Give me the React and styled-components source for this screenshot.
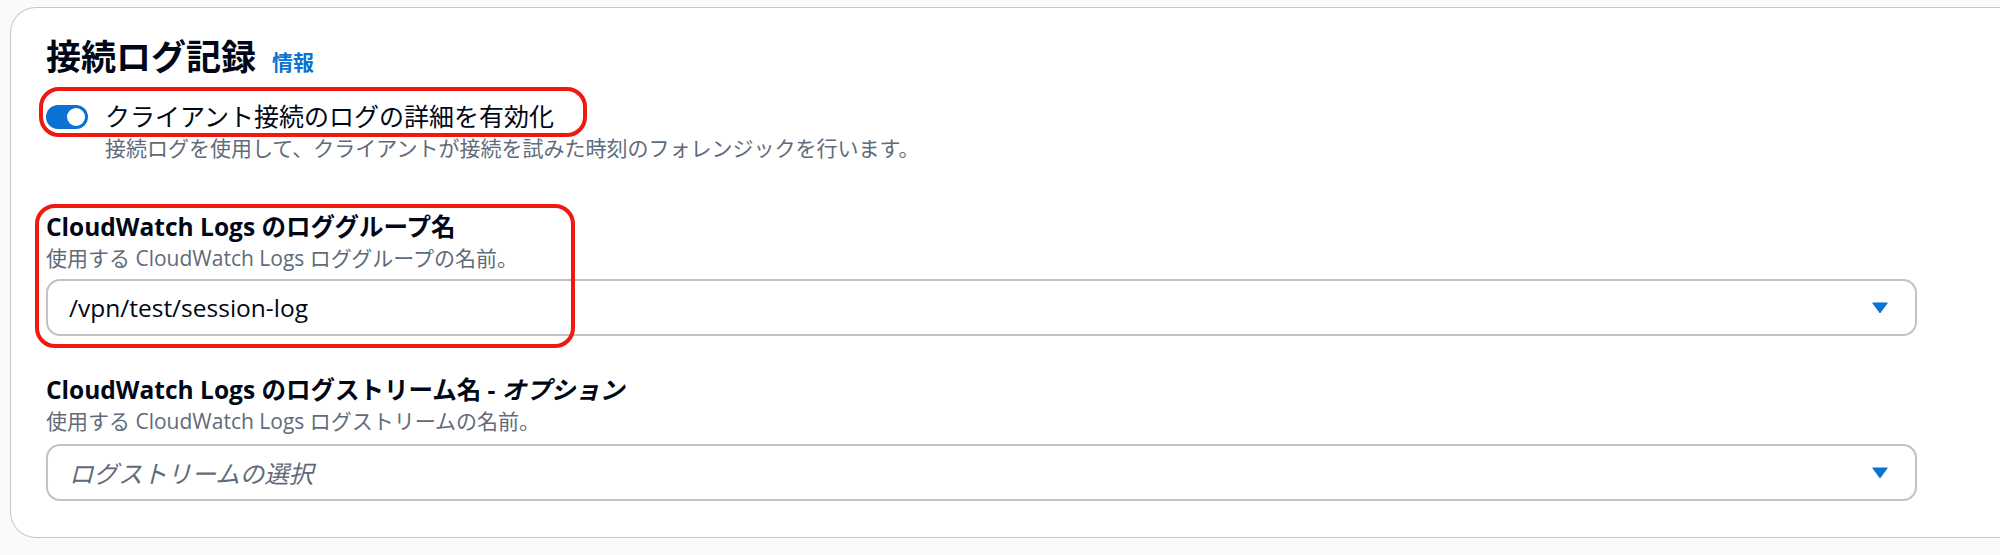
import React from 'react'
import styled, { createGlobalStyle } from 'styled-components'

const GlobalStyle = createGlobalStyle`
  html, body {
    margin: 0;
    padding: 0;
    background: #fafafa;
    font-family: "Open Sans", "Noto Sans CJK JP", sans-serif;
    color: #000716;
  }
`

const Page = styled.div`
  height: 555px;
  padding: 7px 0 0 10px;
  box-sizing: border-box;
  overflow: hidden;
`

const Card = styled.section`
  background: #fff;
  border: 1px solid #c6c6cd;
  border-right: none;
  border-radius: 26px 0 0 26px;
  padding: 28px 0 36px 35px;
`

const Header = styled.div`
  display: flex;
  align-items: baseline;
  gap: 16px;
`

const Title = styled.h2`
  margin: 0;
  font-size: 35px;
  line-height: 42px;
  font-weight: 700;
`

const InfoLink = styled.a`
  font-size: 21px;
  font-weight: 700;
  color: #0972d3;
  text-decoration: none;
`

const ToggleBlock = styled.div`
  margin-top: 21px;
`

const ToggleRow = styled.label`
  position: relative;
  display: inline-flex;
  align-items: center;
  gap: 17px;
  font-size: 25px;
  line-height: 35px;
`

const Track = styled.span`
  position: relative;
  width: 42px;
  height: 24px;
  border-radius: 12px;
  background: ${p => (p.$on ? '#0972d3' : '#8c8c94')};
  flex-shrink: 0;
`

const Knob = styled.span`
  position: absolute;
  top: 3px;
  ${p => (p.$on ? 'right: 3px;' : 'left: 3px;')}
  width: 18px;
  height: 18px;
  border-radius: 50%;
  background: #fff;
`

const Description = styled.div`
  font-size: 21px;
  line-height: 28px;
  color: #5f6b7a;
  padding-left: ${p => p.$indent || 0}px;
`

const Field = styled.div`
  position: relative;
  margin-top: ${p => p.$top}px;
  width: 1871px;
`

const Label = styled.div`
  font-size: 24.5px;
  line-height: 35px;
  font-weight: 700;
`

const SelectBox = styled.div`
  margin-top: ${p => p.$gap}px;
  height: 57px;
  box-sizing: border-box;
  border: 2px solid #c1c1c8;
  border-radius: 14px;
  display: flex;
  align-items: center;
  justify-content: space-between;
  padding: 0 26px 0 21px;
  font-size: 24.5px;
  color: ${p => (p.$placeholder ? '#5f6b7a' : '#000716')};
  font-style: ${p => (p.$placeholder ? 'italic' : 'normal')};
`

const Annotation = styled.div`
  position: absolute;
  border: 4px solid #f0190f;
  border-radius: 20px;
  pointer-events: none;
`

const Caret = () => (
  <svg width="18" height="13" viewBox="0 0 18 13">
    <path d="M2 1.5 H16 Q17.2 1.5 16.4 2.6 L9.8 11.4 Q9 12.4 8.2 11.4 L1.6 2.6 Q0.8 1.5 2 1.5 Z" fill="#0972d3" />
  </svg>
)

const Select = ({ value, placeholder, gap = 7 }) => (
  <SelectBox $placeholder={!value} $gap={gap}>
    <span>{value || placeholder}</span>
    <Caret />
  </SelectBox>
)

export default function App() {
  return (
    <>
      <GlobalStyle />
      <Page>
        <Card>
          <Header>
            <Title>接続ログ記録</Title>
            <InfoLink>情報</InfoLink>
          </Header>

          <ToggleBlock>
            <ToggleRow>
              <Track $on>
                <Knob $on />
              </Track>
              クライアント接続のログの詳細を有効化
              <Annotation style={{ left: -7, top: -12, right: -33, bottom: -3 }} />
            </ToggleRow>
            <Description $indent={59}>
              接続ログを使用して、クライアントが接続を試みた時刻のフォレンジックを行います。
            </Description>
          </ToggleBlock>

          <Field $top={47}>
            <Label>CloudWatch Logs のロググループ名</Label>
            <Description>使用する CloudWatch Logs ロググループの名前。</Description>
            <Select value="/vpn/test/session-log" />
            <Annotation style={{ left: -11, top: -5, width: 532, bottom: -12 }} />
          </Field>

          <Field $top={36}>
            <Label>
              CloudWatch Logs のログストリーム名 - <i>オプション</i>
            </Label>
            <Description>使用する CloudWatch Logs ログストリームの名前。</Description>
            <Select placeholder="ログストリームの選択" gap={9} />
          </Field>
        </Card>
      </Page>
    </>
  )
}
